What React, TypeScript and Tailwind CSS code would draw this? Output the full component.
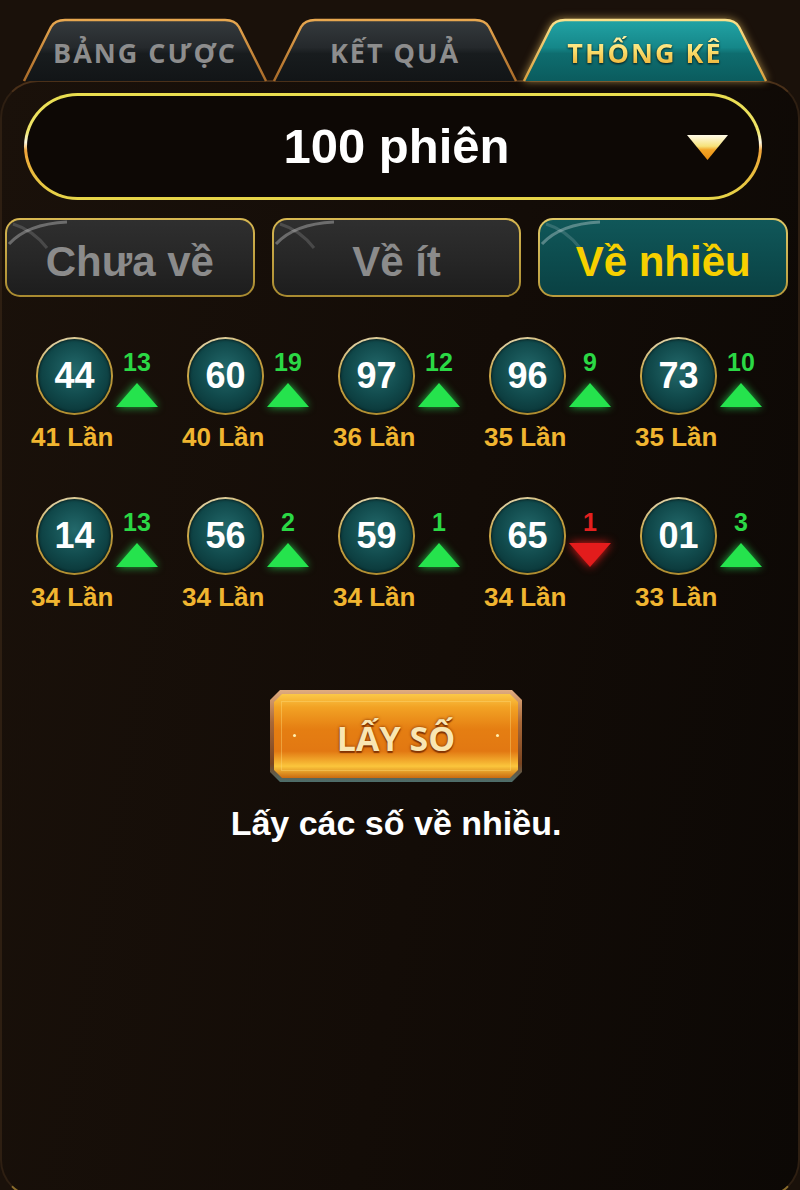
import { useId } from 'react';

type Stat = { num: string; times: number; delta: number; up: boolean };

const stats: Stat[] = [
  { num: '44', times: 41, delta: 13, up: true },
  { num: '60', times: 40, delta: 19, up: true },
  { num: '97', times: 36, delta: 12, up: true },
  { num: '96', times: 35, delta: 9, up: true },
  { num: '73', times: 35, delta: 10, up: true },
  { num: '14', times: 34, delta: 13, up: true },
  { num: '56', times: 34, delta: 2, up: true },
  { num: '59', times: 34, delta: 1, up: true },
  { num: '65', times: 34, delta: 1, up: false },
  { num: '01', times: 33, delta: 3, up: true },
];

function Tab({ label, active }: { label: string; active?: boolean }) {
  const id = useId().replace(/:/g, '');
  return (
    <div className="relative flex h-[62px] w-[246px] items-center justify-center pt-[7px]">
      <svg className="absolute inset-0" width="246" height="62" viewBox="0 0 246 62" overflow="visible">
        <defs>
          <linearGradient id={`f${id}`} x1="0" y1="0" x2="0" y2="1">
            {active ? (
              <>
                <stop offset="0" stopColor="#22a3a5" />
                <stop offset="0.45" stopColor="#158789" />
                <stop offset="0.55" stopColor="#0e6d6f" />
                <stop offset="1" stopColor="#0b5c5e" />
              </>
            ) : (
              <>
                <stop offset="0" stopColor="#353a3d" />
                <stop offset="0.45" stopColor="#25292c" />
                <stop offset="0.55" stopColor="#181c1e" />
                <stop offset="1" stopColor="#121517" />
              </>
            )}
          </linearGradient>
          <linearGradient id={`s${id}`} x1="0" y1="0" x2="0" y2="1">
            {active ? (
              <>
                <stop offset="0" stopColor="#fbe08a" />
                <stop offset="1" stopColor="#d8a040" />
              </>
            ) : (
              <>
                <stop offset="0" stopColor="#e8a850" />
                <stop offset="1" stopColor="#a86a28" />
              </>
            )}
          </linearGradient>
        </defs>
        <path
          d="M2 63 L29 9 Q33 2 43 2 L203 2 Q213 2 217 9 L244 63"
          fill={`url(#f${id})`}
          stroke={`url(#s${id})`}
          strokeWidth="2.5"
          className={active ? 'drop-shadow-[0_0_4px_rgba(255,210,110,0.6)]' : ''}
        />
      </svg>
      {active ? (
        <span className="relative bg-[linear-gradient(180deg,#fff6b8_0%,#fbe070_45%,#f2c048_70%,#e2a430_100%)] bg-clip-text font-['Open_Sans',sans-serif] text-[27px] font-bold leading-[1.6] tracking-[2px] text-transparent drop-shadow-[0_1px_1px_rgba(0,0,0,0.8)]">
          {label}
        </span>
      ) : (
        <span className="relative font-['Open_Sans',sans-serif] text-[27px] font-bold leading-none tracking-[2px] text-[#8d8d8d]">
          {label}
        </span>
      )}
    </div>
  );
}

function FilterButton({ label, active }: { label: string; active?: boolean }) {
  return (
    <div
      className={`h-[79px] flex-1 rounded-[15px] p-[2px] ${
        active
          ? 'bg-[linear-gradient(180deg,#e0c868,#b89a3c)]'
          : 'bg-[linear-gradient(180deg,#d8b852,#a88a30)]'
      }`}
    >
      <div
        className={`relative flex h-full items-center justify-center overflow-hidden rounded-[13px] pt-[9px] ${
          active
            ? 'bg-[linear-gradient(180deg,#105759_0%,#0c4a4c_60%,#0a4143_100%)]'
            : 'bg-[linear-gradient(180deg,#2f2f2f_0%,#262626_55%,#1d1d1d_100%)]'
        }`}
      >
        <svg className="absolute left-0 top-0" width="70" height="34" viewBox="0 0 70 34">
          <path d="M2 24 Q20 4 60 2" fill="none" stroke="rgba(255,255,255,0.3)" strokeWidth="3" />
          <path d="M6 4 Q26 10 40 28" fill="none" stroke="rgba(255,255,255,0.15)" strokeWidth="3" />
        </svg>
        <span
          className={`relative text-[42px] font-bold leading-none ${
            active ? 'text-[#f7d000]' : 'text-[#8b8b8b]'
          }`}
        >
          {label}
        </span>
      </div>
    </div>
  );
}

function Arrow({ up }: { up: boolean }) {
  return (
    <svg
      width="42"
      height="24"
      viewBox="0 0 42 24"
      overflow="visible"
      className={
        up
          ? 'drop-shadow-[0_0_4px_rgba(40,240,90,0.75)]'
          : 'drop-shadow-[0_0_5px_rgba(255,30,30,0.9)]'
      }
    >
      <polygon
        points={up ? '21,0 42,24 0,24' : '0,0 42,0 21,24'}
        fill={up ? '#25e34d' : '#e31c1c'}
      />
    </svg>
  );
}

function StatCell({ s }: { s: Stat }) {
  return (
    <div className="flex flex-col">
      <div className="ml-[6px] flex">
        <div className="h-[78px] w-[77px] rounded-full bg-[linear-gradient(160deg,#e6e2cc_0%,#c9a445_35%,#a8862a_100%)] p-[2px]">
          <div className="flex h-full w-full items-center justify-center rounded-full bg-[radial-gradient(circle_at_50%_42%,#23696b_0%,#114a4c_48%,#06282a_100%)] shadow-[inset_0_0_3px_rgba(0,0,0,0.9)]">
            <span className="text-[36px] font-bold leading-none text-white">{s.num}</span>
          </div>
        </div>
        <div className="ml-[3px] flex w-[42px] flex-col items-center pt-[13px]">
          <span
            className={`h-[25px] text-[25px] font-bold leading-none ${
              s.up ? 'text-[#2bd845]' : 'text-[#e3201f]'
            }`}
          >
            {s.delta}
          </span>
          <div className="mt-[8px] flex">
            <Arrow up={s.up} />
          </div>
        </div>
      </div>
      <span className="mt-[9px] pl-[1px] text-[26px] font-bold leading-none text-[#f0b530]">
        {s.times} Lần
      </span>
    </div>
  );
}

export default function App() {
  return (
    <div className="h-[1190px] w-[800px] overflow-hidden bg-[#1a110a] font-['Liberation_Sans',Arial,sans-serif]">
      <div className="flex h-[80px] items-end gap-[4px] pl-[22px]">
        <Tab label="BẢNG CƯỢC" />
        <Tab label="KẾT QUẢ" />
        <Tab label="THỐNG KÊ" active />
      </div>

      <div className="h-[1118px] rounded-[38px] border-2 border-[#4a3019] border-x-[#2e1f12] border-b-[#8a6c2c] bg-[linear-gradient(100deg,#1a110a_0%,#130c07_55%,#0c0805_100%)]">
        {/* session selector */}
        <div className="ml-[22px] mt-[11px] w-[738px] rounded-[54px] bg-[linear-gradient(180deg,#e9dd4e_0%,#efe46a_36%,#fffbe6_46%,#f0a43a_54%,#e9b83c_72%,#e6d64a_100%)] p-[3px]">
          <div className="relative flex h-[101px] items-center justify-center rounded-[51px] bg-[#0d0805] pl-[7px]">
            <span className="text-[49px] font-bold leading-none text-white">100 phiên</span>
            <svg className="absolute right-[31px] top-[39px]" width="41" height="25" viewBox="0 0 41 25">
              <defs>
                <linearGradient id="dd" x1="0" y1="0" x2="0" y2="1">
                  <stop offset="0" stopColor="#fffbea" />
                  <stop offset="0.45" stopColor="#f6e27a" />
                  <stop offset="0.6" stopColor="#f2a426" />
                  <stop offset="1" stopColor="#e88c10" />
                </linearGradient>
              </defs>
              <polygon points="0,0 41,0 20.5,25" fill="url(#dd)" />
            </svg>
          </div>
        </div>

        {/* filter */}
        <div className="ml-[3px] mt-[18px] flex w-[783px] gap-[17px]">
          <FilterButton label="Chưa về" />
          <FilterButton label="Về ít" />
          <FilterButton label="Về nhiều" active />
        </div>

        {/* numbers */}
        <div className="ml-[28px] mt-[40px] grid w-[755px] grid-cols-5 gap-y-[47px]">
          {stats.map((s) => (
            <StatCell key={s.num} s={s} />
          ))}
        </div>

        {/* action */}
        <div className="ml-[268px] mt-[80px] h-[92px] w-[252px] bg-[linear-gradient(180deg,#e0ac80_0%,#a86838_35%,#7a4420_80%,#4d6e6c_100%)] p-[4px] [clip-path:polygon(10px_0,242px_0,252px_10px,252px_82px,242px_92px,10px_92px,0_82px,0_10px)]">
          <div className="relative flex h-full w-full items-center justify-center bg-[linear-gradient(180deg,#fbc848_0%,#f2a224_16%,#e57e12_42%,#e27812_68%,#fbc63c_86%,#c96a10_100%)] [clip-path:polygon(8px_0,236px_0,244px_8px,244px_76px,236px_84px,8px_84px,0_76px,0_8px)]">
            <div className="absolute inset-[7px] border border-[#ffdb7a]/40" />
            <span className="absolute left-[19px] top-[40px] h-[3px] w-[3px] rounded-full bg-[#fff0b0]" />
            <span className="absolute right-[19px] top-[40px] h-[3px] w-[3px] rounded-full bg-[#fff0b0]" />
            <span className="relative pt-[4px] font-['Open_Sans',sans-serif] text-[34px] font-bold leading-none text-[#f9e6b2] [text-shadow:0_0_3px_#7a2a00,0_2px_1px_#8a3a05]">
              LẤY SỐ
            </span>
          </div>
        </div>
        <p className="mt-[24px] pr-[8px] text-center text-[34px] font-bold leading-none text-white">
          Lấy các số về nhiều.
        </p>
      </div>
    </div>
  );
}
